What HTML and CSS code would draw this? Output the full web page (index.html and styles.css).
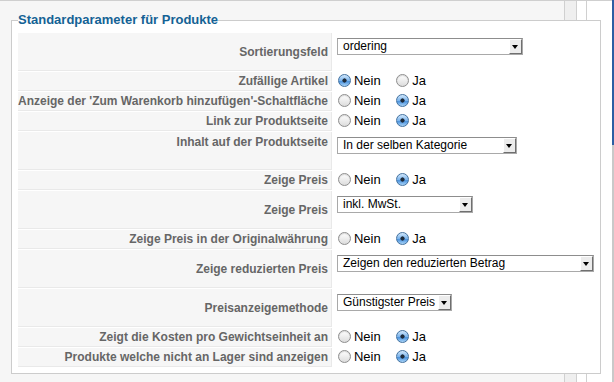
FILE: index.html
```html
<!DOCTYPE html>
<html lang="de">
<head>
  <meta charset="UTF-8" />
  <title>Standardparameter für Produkte</title>
  <link rel="stylesheet" href="styles.css">
</head>
<body>

<div class="strip">
  <span class="fill"></span><span class="c1"></span><span class="c2"></span><span class="c3"></span>
</div>

<div class="main">
  <div class="gutter-left"></div>
  <fieldset class="params">
    <legend>Standardparameter für Produkte</legend>
    <table class="paramlist">
      <tr class="tall">
        <td class="key">Sortierungsfeld</td>
        <td class="value"><div class="select s-ordering"><span>ordering</span><i class="arrow"></i></div></td>
      </tr>
      <tr>
        <td class="key">Zufällige Artikel</td>
        <td class="value">
          <label class="opt"><input type="radio" name="random" checked>Nein</label>
          <label class="opt"><input type="radio" name="random">Ja</label>
        </td>
      </tr>
      <tr>
        <td class="key">Anzeige der 'Zum Warenkorb hinzufügen'-Schaltfläche</td>
        <td class="value">
          <label class="opt"><input type="radio" name="cart">Nein</label>
          <label class="opt"><input type="radio" name="cart" checked>Ja</label>
        </td>
      </tr>
      <tr>
        <td class="key">Link zur Produktseite</td>
        <td class="value">
          <label class="opt"><input type="radio" name="link">Nein</label>
          <label class="opt"><input type="radio" name="link" checked>Ja</label>
        </td>
      </tr>
      <tr class="tall">
        <td class="key top">Inhalt auf der Produktseite</td>
        <td class="value"><div class="select s-content"><span>In der selben Kategorie</span><i class="arrow"></i></div></td>
      </tr>
      <tr>
        <td class="key">Zeige Preis</td>
        <td class="value">
          <label class="opt"><input type="radio" name="price">Nein</label>
          <label class="opt"><input type="radio" name="price" checked>Ja</label>
        </td>
      </tr>
      <tr class="tall">
        <td class="key">Zeige Preis</td>
        <td class="value"><div class="select s-tax"><span>inkl. MwSt.</span><i class="arrow"></i></div></td>
      </tr>
      <tr>
        <td class="key">Zeige Preis in der Originalwährung</td>
        <td class="value">
          <label class="opt"><input type="radio" name="orig">Nein</label>
          <label class="opt"><input type="radio" name="orig" checked>Ja</label>
        </td>
      </tr>
      <tr class="tall">
        <td class="key">Zeige reduzierten Preis</td>
        <td class="value"><div class="select s-discount"><span>Zeigen den reduzierten Betrag</span><i class="arrow"></i></div></td>
      </tr>
      <tr class="tall">
        <td class="key">Preisanzeigemethode</td>
        <td class="value"><div class="select s-method"><span>Günstigster Preis</span><i class="arrow"></i></div></td>
      </tr>
      <tr>
        <td class="key">Zeigt die Kosten pro Gewichtseinheit an</td>
        <td class="value">
          <label class="opt"><input type="radio" name="weight">Nein</label>
          <label class="opt"><input type="radio" name="weight" checked>Ja</label>
        </td>
      </tr>
      <tr>
        <td class="key">Produkte welche nicht an Lager sind anzeigen</td>
        <td class="value">
          <label class="opt"><input type="radio" name="stock">Nein</label>
          <label class="opt"><input type="radio" name="stock" checked>Ja</label>
        </td>
      </tr>
    </table>
  </fieldset>
  <div class="gutter-right"></div>
</div>

<div class="strip bottom">
  <span class="fill"></span><span class="c1"></span><span class="c2"></span><span class="c3"></span>
</div>

<div class="edge"></div>

</body>
</html>
```

FILE: styles.css
```css
* { margin: 0; padding: 0; box-sizing: border-box; }
html, body { height: 100%; overflow: hidden; }
body { background: #f6f6f6; font-family: 'Liberation Sans', Arial, Helvetica, sans-serif; color: #000; position: relative; }

.strip { display: flex; height: 20px; border-top: 1px solid #cfcfcf; }
.strip span { display: block; height: 100%; }
.strip .fill { width: 564px; background: #f6f6f6; }
.strip .c1 { width: 12px; background: #efefef; border-left: 1px solid #d0d0d0; }
.strip .c2 { width: 10px; background: #fff; border-left: 1px solid #d0d0d0; }
.strip .c3 { flex: 1; background: #fff; border-left: 1px solid #d0d0d0; }
.strip.bottom { height: 12px; border-top: none; }

.main { display: flex; margin-top: -8px; }
.gutter-left { width: 11px; }
.gutter-right { width: 13px; background: #fff; margin-top: 8px; }

fieldset.params { width: 589px; border: 1px solid #cccccc; background: #fff; padding: 4px 5px 5px 5px; }
fieldset.params legend { color: #146295; font-size: 13px; line-height: 16px; font-weight: bold; padding: 0; margin-left: 1px; }

table.paramlist { width: 100%; border-collapse: separate; border-spacing: 1px; }
table.paramlist td { height: 19px; vertical-align: middle; }
table.paramlist tr.tall td { height: 38px; }
td.key { width: 312px; background: #f6f6f6; color: #666; font-weight: bold; font-size: 12px; text-align: right; padding-right: 3px; border-bottom: 1px solid #e9e9e9; border-right: 1px solid #e9e9e9; white-space: nowrap; }
td.key.top { vertical-align: top; padding-top: 3px; }
td.value { padding-left: 4px; font-size: 13px; white-space: nowrap; }
tr.tall td.value { vertical-align: top; padding-top: 5px; }

.opt { display: inline-flex; align-items: center; gap: 3px; margin-right: 11px; line-height: 15px; }
.opt input { appearance: none; -webkit-appearance: none; width: 13px; height: 13px; margin: 0 0 0 1px; border-radius: 50%; border: 1px solid #8e8e8e; background: linear-gradient(#ffffff, #dcdcdc); box-shadow: inset 0 1px 1px rgba(0,0,0,0.15); }
.opt input:checked { border-color: #44729f; background: radial-gradient(circle, #1e2c3c 0, #1e2c3c 1.8px, transparent 2.4px), linear-gradient(#d2e8fc, #7db5ec 50%, #4c93dd 60%, #a9d4f8); box-shadow: none; }

.select { display: flex; align-items: center; height: 17px; border: 1px solid #a9a9a9; border-top-color: #8d8d8d; background: #fff; font-size: 12px; line-height: 15px; }
.select span { padding-left: 5px; flex: 1; }
.select .arrow { display: flex; align-items: center; justify-content: center; width: 13px; height: 15px; background: #ececec; border-left: 1px solid #fff; border-top: 1px solid #fff; border-right: 1px solid #6f6f6f; border-bottom: 1px solid #6f6f6f; }
.select .arrow::after { content: ""; border-left: 3px solid transparent; border-right: 3px solid transparent; border-top: 4px solid #000; }
.s-ordering { width: 186px; }
.s-content { width: 180px; }
.s-tax { width: 136px; }
.s-discount { width: 257px; }
.s-method { width: 115px; }

.edge { position: absolute; top: 0; right: 0; width: 2px; height: 100%; background: linear-gradient(#2c5ea3 0, #2c5ea3 145px, #c9c9c9 145px); }
```
